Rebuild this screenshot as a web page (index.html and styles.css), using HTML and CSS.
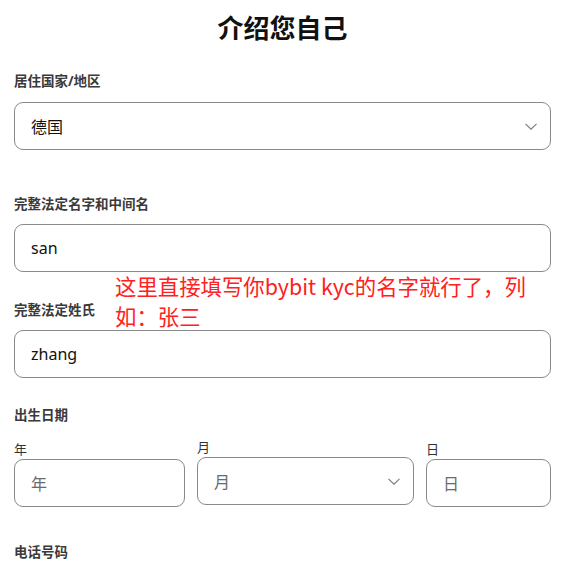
FILE: index.html
```html
<!DOCTYPE html>
<html lang="zh-CN">
<head>
    <meta charset="UTF-8">
    <meta name="viewport" content="width=device-width, initial-scale=1.0">
    <title>介绍您自己</title>
    <link rel="stylesheet" href="styles.css">
</head>
<body>

<div class="form-container">
    <h1>介绍您自己</h1>

    <div class="field field-country">
        <label class="field-label">居住国家/地区</label>
        <div class="box select-box">
            <span class="box-value">德国</span>
            <svg class="chevron" width="12" height="7" viewBox="0 0 12 7"><path d="M0.5 0.8l5.5 5.4 5.5-5.4" fill="none" stroke="#7a7a7a" stroke-width="1.1"/></svg>
        </div>
    </div>

    <div class="field field-first">
        <label class="field-label">完整法定名字和中间名</label>
        <div class="box"><span class="box-value">san</span></div>
    </div>

    <div class="field field-last">
        <label class="field-label">完整法定姓氏</label>
        <div class="box"><span class="box-value">zhang</span></div>
    </div>

    <div class="field field-birth">
        <label class="field-label">出生日期</label>
        <div class="date-row">
            <div class="date-col">
                <span class="sub-label">年</span>
                <div class="box"><span class="box-placeholder">年</span></div>
            </div>
            <div class="date-col date-month">
                <span class="sub-label">月</span>
                <div class="box select-box">
                    <span class="box-placeholder">月</span>
                    <svg class="chevron" width="12" height="7" viewBox="0 0 12 7"><path d="M0.5 0.8l5.5 5.4 5.5-5.4" fill="none" stroke="#7a7a7a" stroke-width="1.1"/></svg>
                </div>
            </div>
            <div class="date-col">
                <span class="sub-label">日</span>
                <div class="box"><span class="box-placeholder">日</span></div>
            </div>
        </div>
    </div>

    <div class="field field-phone">
        <label class="field-label">电话号码</label>
    </div>

    <!-- annotation drawn on top of the screenshot -->
    <div class="note">这里直接填写你bybit kyc的名字就行了，列<br>如：张三</div>
</div>

</body>
</html>
```

FILE: styles.css
```css
body {
    margin: 0;
    font-family: "Noto Sans", "Noto Sans CJK SC", sans-serif;
    background-color: #fff;
    color: #111;
}

.form-container {
    position: relative;
    width: 537px;
    margin-left: 14px;
    padding-top: 10px;
}

h1 {
    margin: 0;
    font-size: 26px;
    line-height: 36px;
    font-weight: 700;
    text-align: center;
    color: #111;
}

.field-label {
    display: block;
    font-size: 13.5px;
    line-height: 20px;
    font-weight: 700;
    color: #3a3a3a;
}

.field-country {
    margin-top: 25px;
}

.field-country .field-label {
    margin-bottom: 11px;
}

.field-first {
    margin-top: 44px;
}

.field-last {
    margin-top: 28px;
}

.field-first .field-label,
.field-last .field-label {
    margin-bottom: 10px;
}

.field-birth {
    margin-top: 27px;
}

.field-birth .field-label {
    margin-bottom: 14px;
}

.field-phone {
    margin-top: 35px;
}

.box {
    box-sizing: border-box;
    height: 48px;
    border: 1px solid #8a8a8a;
    border-radius: 9px;
    padding: 0 16px;
    display: flex;
    align-items: center;
    justify-content: space-between;
}

.box-value {
    font-size: 16px;
    color: #111;
}

.box-placeholder {
    font-size: 16px;
    color: #6a6a6a;
}

.chevron {
    margin-right: -3px;
}

.date-row {
    display: grid;
    grid-template-columns: 171px 217px 1fr;
    column-gap: 12px;
}

.sub-label {
    display: block;
    font-size: 13px;
    line-height: 20px;
    color: #333;
}

.date-month {
    margin-top: -2px;
}

.date-month .chevron {
    margin-right: -3px;
}

.note {
    position: absolute;
    left: 101px;
    top: 271px;
    font-family: "Noto Sans CJK SC", sans-serif;
    font-size: 21.4px;
    line-height: 30px;
    color: #ff2020;
    white-space: nowrap;
}
```
